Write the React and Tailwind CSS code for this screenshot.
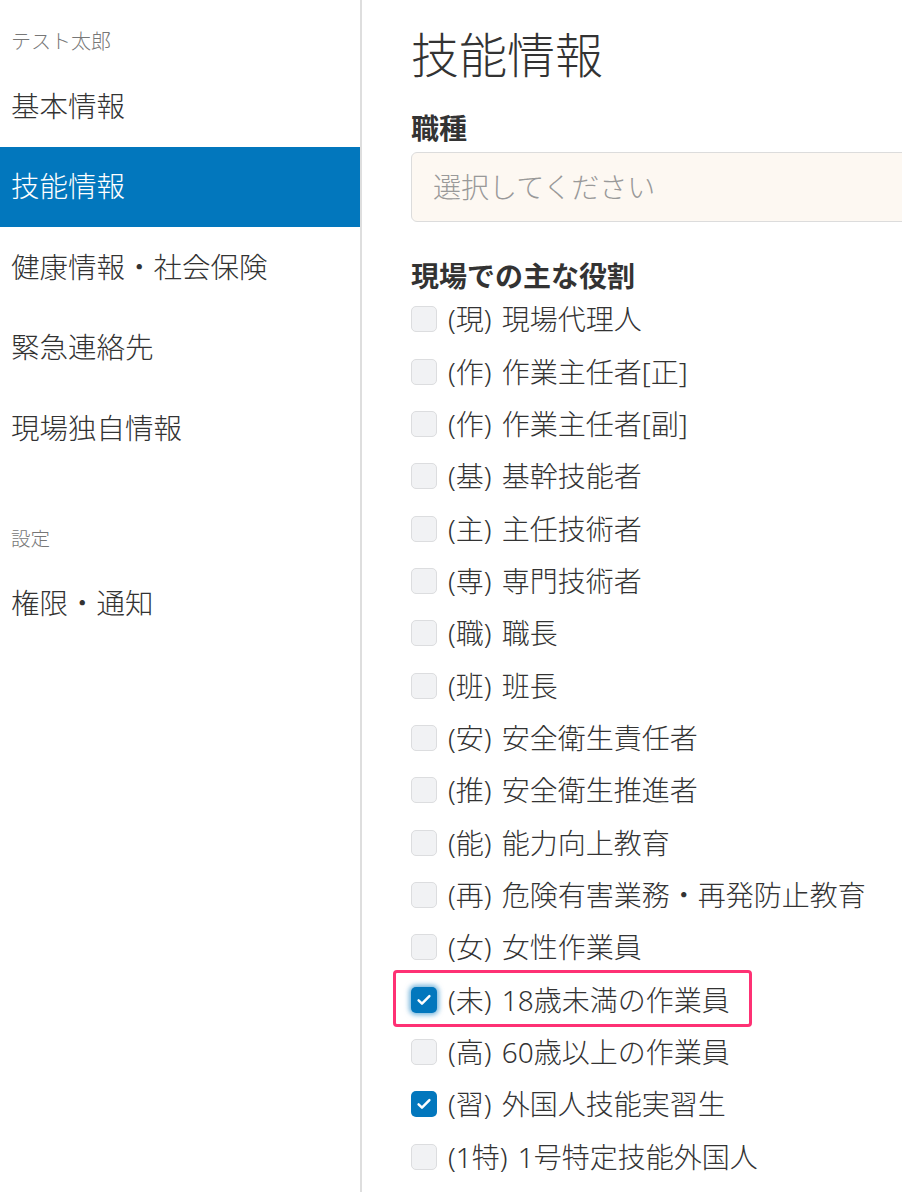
import React from "react";

const FONT = { fontFamily: '"Noto Sans", "Noto Sans CJK JP", sans-serif' };

const roles = [
  { t: "(現) 現場代理人" },
  { t: "(作) 作業主任者[正]" },
  { t: "(作) 作業主任者[副]" },
  { t: "(基) 基幹技能者" },
  { t: "(主) 主任技術者" },
  { t: "(専) 専門技術者" },
  { t: "(職) 職長" },
  { t: "(班) 班長" },
  { t: "(安) 安全衛生責任者" },
  { t: "(推) 安全衛生推進者" },
  { t: "(能) 能力向上教育" },
  { t: "(再) 危険有害業務・再発防止教育" },
  { t: "(女) 女性作業員" },
  { t: "(未) 18歳未満の作業員", checked: true, focus: true },
  { t: "(高) 60歳以上の作業員" },
  { t: "(習) 外国人技能実習生", checked: true },
  { t: "(1特) 1号特定技能外国人" },
];

function Check({ checked, focus }) {
  if (checked) {
    return (
      <span
        className={
          "flex h-[26px] w-[26px] shrink-0 items-center justify-center rounded-[5px] bg-[#0277bd] " +
          (focus ? "shadow-[0_0_5px_2px_rgba(2,119,189,0.55)]" : "")
        }
      >
        <svg width="18" height="18" viewBox="0 0 16 16" fill="none">
          <path d="M3.2 8.3l3 2.9 6.6-6.7" stroke="white" strokeWidth="2.2" strokeLinecap="round" strokeLinejoin="round" />
        </svg>
      </span>
    );
  }
  return <span className="block h-[26px] w-[26px] shrink-0 rounded-[5px] border border-[#dcdddf] bg-[#f1f2f4]" />;
}

function Row({ r }) {
  const inner = (
    <div className="flex h-[52.35px] items-center gap-[11px]">
      <Check checked={r.checked} focus={r.focus} />
      <span className="text-[28px] leading-[36px] font-light text-[#333] [word-spacing:3px]">{r.t}</span>
    </div>
  );
  if (r.focus) {
    return (
      <div className="relative w-fit">
        {inner}
        <div className="pointer-events-none absolute -top-[3px] -bottom-[1px] -left-[18px] -right-[22px] rounded-[4px] border-[3px] border-[#fe3174]" />
      </div>
    );
  }
  return inner;
}

const navItems = ["基本情報", "技能情報", "健康情報・社会保険", "緊急連絡先", "現場独自情報"];

export default function App() {
  return (
    <div className="flex h-[1192px] w-[902px] overflow-hidden bg-white" style={FONT}>
      <aside className="w-[362px] shrink-0 border-r-2 border-[#dedede]">
        <div className="flex h-[66px] items-end pb-[12px] pl-[11px] text-[20px] leading-[24px] font-light text-[#777]">テスト太郎</div>
        {navItems.map((n) => (
          <div
            key={n}
            className={
              "flex h-[80.5px] items-center pl-[11px] text-[28.5px] font-light " +
              (n === "技能情報" ? "bg-[#0277bd] text-white" : "text-[#333]")
            }
          >
            {n}
          </div>
        ))}
        <div className="mt-[58px] pl-[11px] text-[19.5px] leading-[24px] font-light text-[#777]">設定</div>
        <div className="mt-[13px] flex h-[80px] items-center pl-[11px] text-[28.5px] font-light text-[#333]">権限・通知</div>
      </aside>
      <main className="min-w-0 flex-1 pl-[49px] pt-[27px]">
        <h1 className="text-[48px] leading-[56px] font-light text-[#333]">技能情報</h1>
        <div className="mt-[27px] text-[28px] leading-[36px] font-bold text-[#333]">職種</div>
        <div className="mt-[6px] flex h-[70px] w-[560px] items-center rounded-[6px] border border-[#dcdcdc] bg-[#fdf8f2] pl-[21px] text-[28px] font-light text-[#999]">
          選択してください
        </div>
        <div className="mt-[37px] text-[28px] leading-[34px] font-bold text-[#333]">現場での主な役割</div>
        <div className="flex flex-col">
          {roles.map((r) => (
            <Row key={r.t} r={r} />
          ))}
        </div>
      </main>
    </div>
  );
}
